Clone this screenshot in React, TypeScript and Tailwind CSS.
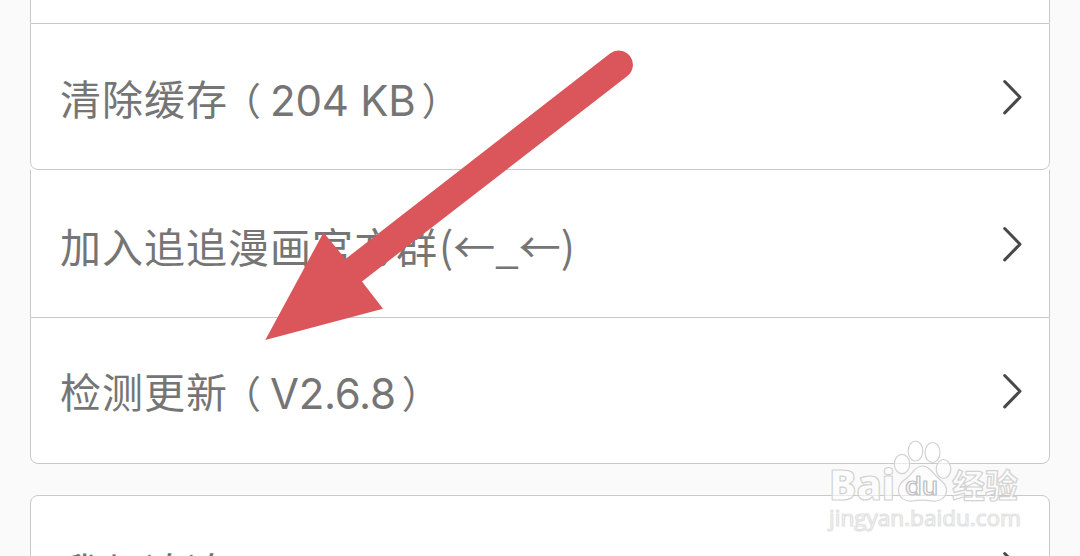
import type { ReactNode } from "react";

type RowProps = {
  children: ReactNode;
  className?: string;
};

function Chevron() {
  return (
    <svg width="24" height="40" viewBox="0 0 24 40" fill="none" aria-hidden="true">
      <path
        d="M4.7 4.5 20 20.2 4.7 35.9"
        stroke="#484848"
        strokeWidth="3"
        strokeLinecap="round"
        strokeLinejoin="round"
      />
    </svg>
  );
}

function Row({ children, className = "" }: RowProps) {
  return (
    <button
      type="button"
      className={`flex w-full items-center justify-between border-[#c9c9c9] bg-white pr-[25px] pl-[29px] text-left leading-none whitespace-nowrap text-[#757575] ${className}`}
    >
      <span className="flex items-baseline pt-[3px] text-[42px]">{children}</span>
      <Chevron />
    </button>
  );
}

function Label({ children }: { children: ReactNode }) {
  return (
    <span className="font-['Noto_Sans_CJK_SC',sans-serif] text-[41px] tracking-[1px]">
      {children}
    </span>
  );
}

// The value and its full-width brackets, set a little apart from the digits
function Bracketed({ children }: { children: ReactNode }) {
  return (
    <>
      <span className="mr-[9px] -ml-[5px] font-['Noto_Sans_CJK_SC',sans-serif] text-[38px]">（</span>
      <span className="translate-y-px">{children}</span>
      <span className="ml-[6px] font-['Noto_Sans_CJK_SC',sans-serif] text-[38px]">）</span>
    </>
  );
}

function Arrow() {
  return (
    <svg className="absolute top-0 left-0" width="1080" height="556" aria-hidden="true">
      <path
        d="M265.3 340 323.5 232.5 345.5 259 610 53.5A14.2 14.2 0 0 1 627.4 76L362 281.5 383 308.7Z"
        fill="#db565a"
      />
    </svg>
  );
}

function Watermark() {
  return (
    <svg
      className="absolute top-[430px] left-[810px]"
      width="240"
      height="126"
      fill="#fff"
      fillOpacity="0.6"
      stroke="#d2d2d2"
      strokeWidth="1.2"
      strokeLinejoin="round"
    >
      <text
        x="19"
        y="70"
        textLength="66"
        lengthAdjust="spacingAndGlyphs"
        fontSize="43"
        className="font-['Open_Sans',sans-serif] font-extrabold"
      >
        Bai
      </text>
      <ellipse cx="105.5" cy="21" rx="7.3" ry="10" />
      <ellipse cx="122.5" cy="22.5" rx="7.5" ry="10" />
      <ellipse cx="92" cy="34" rx="7.7" ry="9.7" />
      <ellipse cx="133.5" cy="39" rx="7.3" ry="9.5" />
      <path d="M112 36c-7 0-9 7-14 11-5 4-9.500 7-9.500 13 0 8 7 12 14 11 6-1 13-1 19 0 8 1 15-3 15-11 0-6-5-9-9.500-13-5-5-8-11-15-11Z" />
      <text x="95" y="65" textLength="33" lengthAdjust="spacingAndGlyphs" fontSize="25" fontWeight="500" stroke="#bfbfbf" fontFamily="Inter">
        du
      </text>
      <text
        x="142"
        y="68"
        textLength="66"
        lengthAdjust="spacingAndGlyphs"
        fontSize="33"
        className="font-['Noto_Sans_CJK_SC',sans-serif] font-bold"
      >
        经验
      </text>
      <text x="19" y="96" textLength="192" lengthAdjust="spacingAndGlyphs" fontSize="22" stroke="#e2e2e2" fontFamily="Open Sans">
        jingyan.baidu.com
      </text>
    </svg>
  );
}

export default function App() {
  return (
    <main className="relative h-[556px] w-[1080px] overflow-hidden bg-[#fafafa] px-[30px] font-[Inter,sans-serif]">
      <div className="h-[23px] border-x border-[#c9c9c9] bg-white" />

      <Row className="h-[147px] rounded-b-lg border pt-px">
        <Label>清除缓存</Label>
        <Bracketed>
          <span className="tracking-[-0.2px]">204 KB</span>
        </Bracketed>
      </Row>
      <Row className="h-[147px] border-x">
        <Label>加入追追漫画官方群</Label>
        <span className="ml-px font-['Noto_Sans_CJK_SC',sans-serif]">(←_←)</span>
      </Row>
      <Row className="h-[147px] rounded-b-lg border">
        <Label>检测更新</Label>
        <Bracketed>
          <span className="tracking-[-0.3px]">V2.6.8</span>
        </Bracketed>
      </Row>

      <Row className="mt-[31px] h-[147px] rounded-t-lg border">
        <Label>我与追追</Label>
      </Row>

      <Arrow />
      <Watermark />
    </main>
  );
}
